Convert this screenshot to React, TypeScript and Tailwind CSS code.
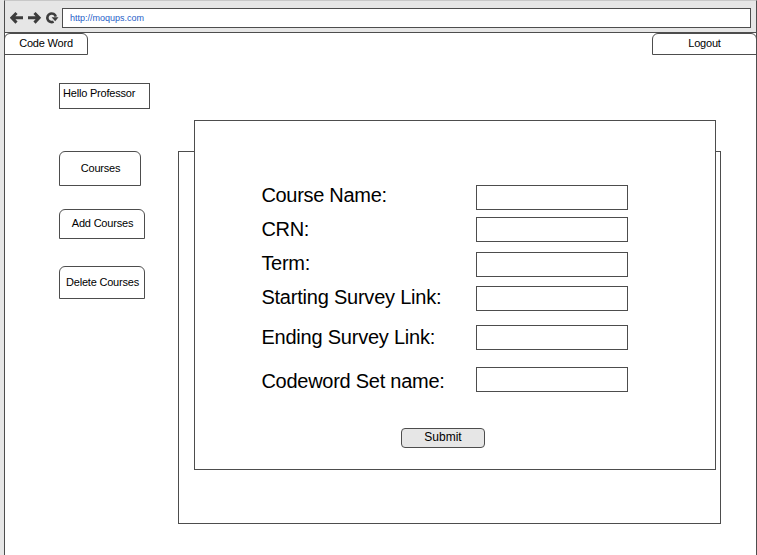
import React from "react";

function SideButton({ label, className }: { label: string; className: string }) {
  return (
    <button
      className={`block rounded-t-[6px] border border-[#4d4d4d] bg-white pl-px text-center text-[11px] tracking-[-0.2px] whitespace-nowrap ${className}`}
    >
      {label}
    </button>
  );
}

const fields = [
  { label: "Course Name:", row: "h-[25px]", text: "-mt-[4px] tracking-[-0.3px]" },
  { label: "CRN:", row: "mt-[7px] h-[25px]", text: "-mt-[2px] tracking-[-0.3px]" },
  { label: "Term:", row: "mt-[10px] h-[25px]", text: "-mt-[3px] tracking-[-0.3px]" },
  { label: "Starting Survey Link:", row: "mt-[9px] h-[25px]", text: "-mt-[3px] tracking-[-0.22px]" },
  { label: "Ending Survey Link:", row: "mt-[14px] h-[25px]", text: "-mt-[2px] tracking-[-0.22px]" },
  { label: "Codeword Set name:", row: "mt-[17px] h-[25px]", text: "mt-0 tracking-[-0.26px]" },
];

export default function App() {
  return (
    <div className="flex h-[555px] w-[757px] flex-col overflow-hidden bg-[#e6e6e6] font-['Liberation_Sans',Arial,sans-serif] text-black">
      <header className="ml-1 flex h-8 shrink-0 border-x border-t border-x-[#4d4d4d] border-t-[#c8c8c8] pt-[7px] pl-[5px]">
        <svg className="mt-[3px] h-[14px] w-[49px] shrink-0" viewBox="0 0 49 14" fill="none" stroke="#3d3d3d" strokeWidth="3">
          <path d="M6.5 2 1.9 6.8 6.5 11.6M2 6.8h11" />
          <path d="M24.5 2 29.1 6.8 24.5 11.6M29 6.8H18" />
          <path d="M43.6 10.6A4.3 4.3 0 1 1 45.8 5.6" strokeWidth="2.6" />
          <path d="M41.6 6.2h6.9L45.2 10.3z" fill="#3d3d3d" stroke="none" />
        </svg>
        <div className="ml-[3px] h-5 w-[689px] border border-[#4d4d4d] bg-white pl-[7px] text-[9px] leading-[18px] text-[#1f60c8]">
          http://moqups.com
        </div>
      </header>
      <main className="ml-1 flex-1 border border-b-0 border-[#4d4d4d] bg-white">
        <nav className="-mr-px -ml-px flex justify-between text-[11px] leading-[19px] tracking-[-0.2px]">
          <div className="h-[22px] w-[84px] rounded-t-[6px] border border-[#4d4d4d] text-center">Code Word</div>
          <div className="h-[22px] w-[105px] rounded-t-[6px] border border-[#4d4d4d] text-center">Logout</div>
        </nav>
        <div className="flex pl-[54px]">
          <aside className="w-[119px] shrink-0 pt-7">
            <div className="h-[26px] w-[91px] border border-[#4d4d4d] pl-[3px] text-[11px] leading-[19px] tracking-[-0.2px] whitespace-nowrap">
              Hello Professor
            </div>
            <SideButton label="Courses" className="mt-[42px] h-[35px] w-[82px]" />
            <SideButton label="Add Courses" className="mt-[23px] h-[30px] w-[86px] pb-px" />
            <SideButton label="Delete Courses" className="mt-[27px] h-[33px] w-[86px]" />
          </aside>
          <section className="mt-[96px] h-[373px] w-[543px] border border-[#4d4d4d] pl-[15px]">
            <form className="-mt-[32px] h-[350px] w-[522px] border border-[#4d4d4d] bg-white pt-[64px] pl-[66px]">
              {fields.map((f) => (
                <label key={f.label} className={`flex ${f.row}`}>
                  <span className={`w-[215px] pl-[0.4px] text-[20px] leading-[28px] whitespace-nowrap ${f.text}`}>{f.label}</span>
                  <input className="h-[25px] w-[152px] border border-[#4d4d4d]" />
                </label>
              ))}
              <button
                type="button"
                className="mt-[36px] ml-[140px] block h-5 w-[84px] rounded-[4px] border border-[#4d4d4d] bg-[#e6e6e6] pb-[2px] text-center text-[12px] leading-[16px]"
              >
                Submit
              </button>
            </form>
          </section>
        </div>
      </main>
    </div>
  );
}
